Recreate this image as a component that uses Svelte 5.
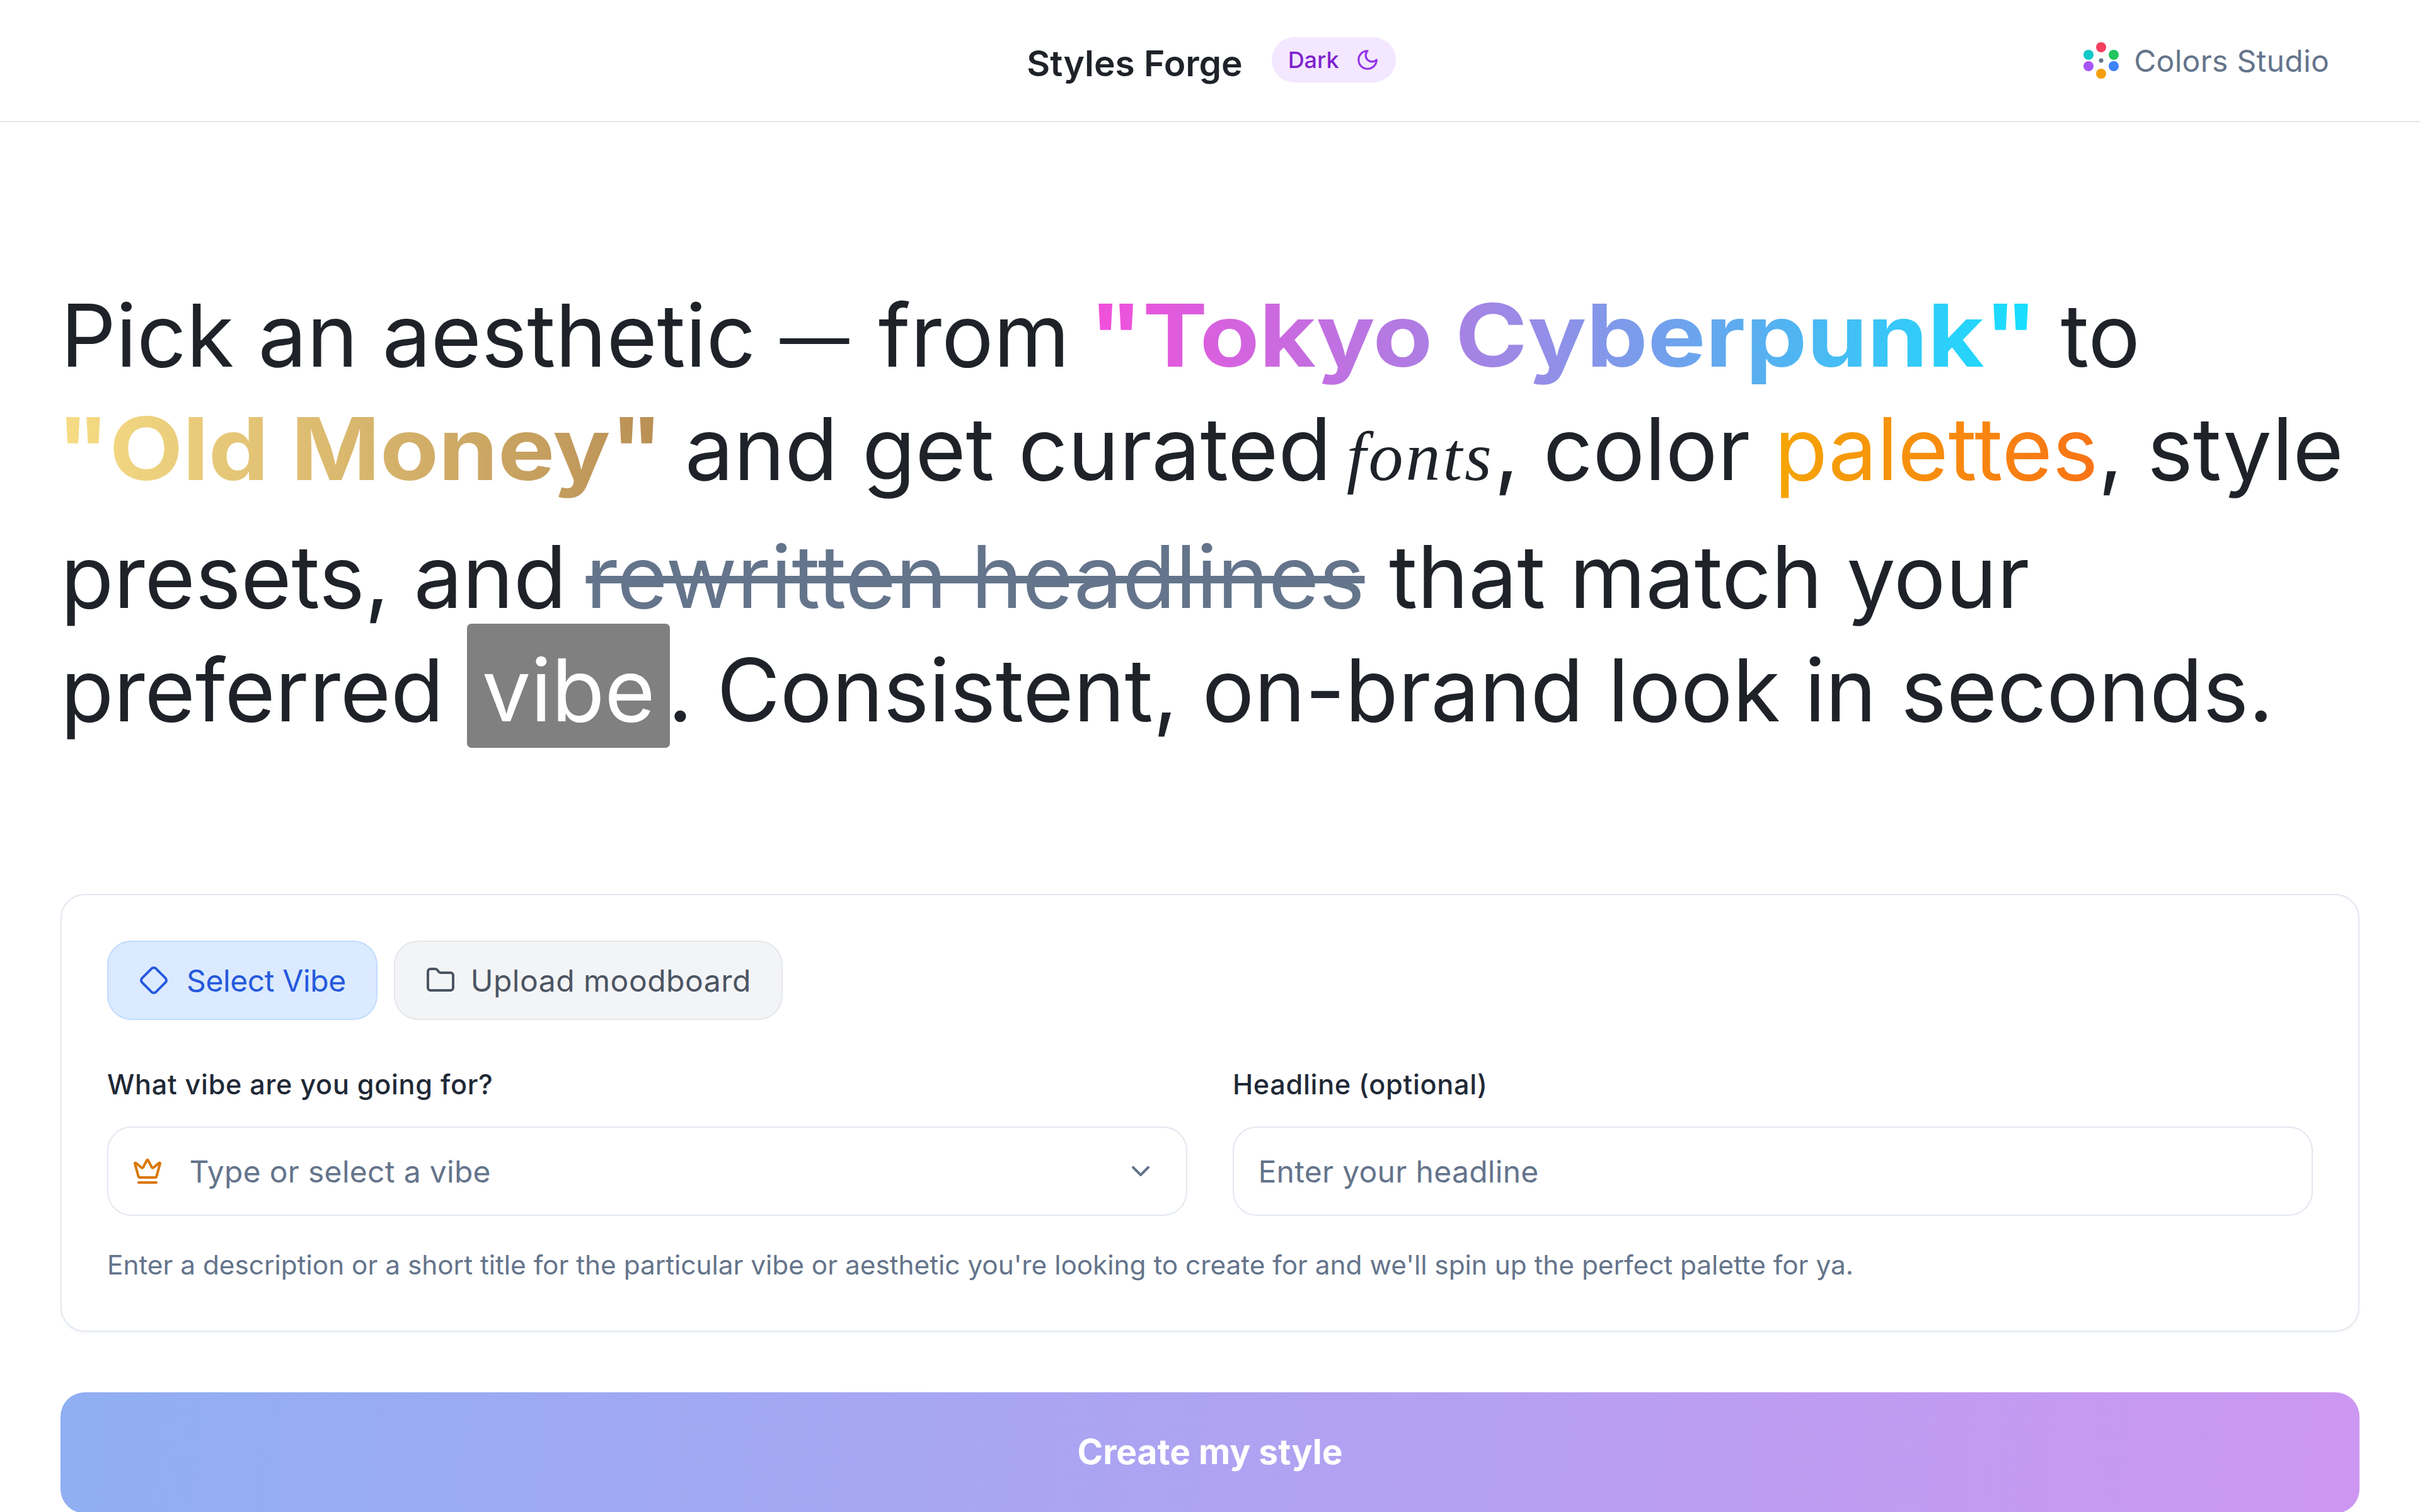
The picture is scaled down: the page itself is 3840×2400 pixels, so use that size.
<script>
  const dots = [
    { cx: 30, cy: 9, fill: '#f43f5e' },
    { cx: 50, cy: 21, fill: '#22c55e' },
    { cx: 50, cy: 39, fill: '#3b82f6' },
    { cx: 30, cy: 51, fill: '#f59e0b' },
    { cx: 10, cy: 39, fill: '#a855f7' },
    { cx: 10, cy: 21, fill: '#14c8c8' }
  ];
</script>

<header class="topbar">
  <div class="brand">
    <span class="title">Styles Forge</span>
    <span class="badge">
      Dark
      <svg viewBox="0 0 24 24" class="moon"><path d="M12 3a6 6 0 0 0 9 9 9 9 0 1 1-9-9Z" /></svg>
    </span>
  </div>
  <a class="studio" href="#studio">
    <svg viewBox="0 0 60 60" class="logo">
      {#each dots as dot}
        <circle cx={dot.cx} cy={dot.cy} r="8" fill={dot.fill} />
      {/each}
      <circle cx="30" cy="30" r="3.5" fill="#64748b" />
    </svg>
    Colors Studio
  </a>
</header>

<main>
  <h1>
    Pick an aesthetic <span class="dash">—</span> from <span class="bold tokyo">"Tokyo Cyberpunk"</span> to<br />
    <span class="bold money">"Old Money"</span> and get curated <span class="script">fonts</span>, color <span class="palettes">palettes</span>, style<br />
    presets, and <span class="strike">rewritten headlines</span> that match your<br />
    preferred <span class="vibe">vibe</span>. Consistent, on-brand look in seconds.
  </h1>

  <section class="card">
    <div class="tabs">
      <button class="tab active">
        <svg viewBox="0 0 24 24"><path d="M2.7 10.3a2.41 2.41 0 0 0 0 3.41l7.59 7.59a2.41 2.41 0 0 0 3.41 0l7.59-7.59a2.41 2.41 0 0 0 0-3.41l-7.59-7.59a2.41 2.41 0 0 0-3.41 0Z" /></svg>
        Select Vibe
      </button>
      <button class="tab">
        <svg viewBox="0 0 24 24"><path d="M20 20a2 2 0 0 0 2-2V8a2 2 0 0 0-2-2h-7.9a2 2 0 0 1-1.69-.9L9.6 3.9A2 2 0 0 0 7.93 3H4a2 2 0 0 0-2 2v13a2 2 0 0 0 2 2Z" /></svg>
        Upload moodboard
      </button>
    </div>

    <div class="fields">
      <div class="field">
        <span class="label">What vibe are you going for?</span>
        <div class="input">
          <svg viewBox="0 0 24 24" class="crown">
            <path d="M11.562 3.266a.5.5 0 0 1 .876 0L15.39 8.87a1 1 0 0 0 1.516.294L21.183 5.5a.5.5 0 0 1 .798.519l-2.834 10.246a1 1 0 0 1-.956.734H5.81a1 1 0 0 1-.957-.734L2.02 6.02a.5.5 0 0 1 .798-.519l4.276 3.664a1 1 0 0 0 1.516-.294z" />
            <path d="M5 21h14" />
          </svg>
          <span class="placeholder">Type or select a vibe</span>
          <svg viewBox="0 0 24 24" class="chevron"><path d="m6 9 6 6 6-6" /></svg>
        </div>
      </div>
      <div class="field">
        <span class="label">Headline (optional)</span>
        <div class="input">
          <span class="placeholder">Enter your headline</span>
        </div>
      </div>
    </div>

    <p class="help">Enter a description or a short title for the particular vibe or aesthetic you're looking to create for and we'll spin up the perfect palette for ya.</p>
  </section>

  <button class="create">Create my style</button>
</main>

<style>
  :global(html), :global(body) {
    height: 100%;
    overflow: hidden;
    background: #fff;
  }

  :global(body) {
    font-family: Inter, "Liberation Sans", sans-serif;
    color: #1f2329;
  }

  svg {
    fill: none;
    stroke: currentColor;
    stroke-width: 2;
    stroke-linecap: round;
    stroke-linejoin: round;
    flex: none;
  }

  .topbar {
    position: relative;
    height: 192px;
    border-bottom: 2.4px solid #e5e7eb;
    display: flex;
    justify-content: center;
    align-items: center;
  }

  .brand {
    display: flex;
    align-items: center;
    gap: 46px;
    padding: 4px 0 0 4px;
  }

  .title {
    font-size: 56.8px;
    font-weight: 600;
    padding-top: 4px;
  }

  .badge {
    height: 72px;
    padding: 0 26px;
    border-radius: 36px;
    background: #f3e8ff;
    color: #7e22ce;
    font-size: 36px;
    font-weight: 500;
    display: flex;
    align-items: center;
    gap: 26px;
    margin-top: -6px;
  }

  .moon {
    width: 38px;
    height: 38px;
    color: #9333ea;
  }

  .studio {
    position: absolute;
    right: 144px;
    top: 66px;
    display: flex;
    align-items: center;
    gap: 22px;
    font-size: 48px;
    letter-spacing: 0.3px;
    color: #64748b;
    text-decoration: none;
  }

  .logo {
    width: 60px;
    height: 60px;
    stroke: none;
  }

  main {
    padding: 248px 96px 0;
  }

  h1 {
    margin: 0;
    font-size: 138px;
    font-weight: 400;
    line-height: 180px;
    letter-spacing: -0.3px;
    white-space: nowrap;
    color: #1f2329;
  }

  .dash {
    font-size: 110px;
    line-height: 0;
    vertical-align: 6px;
    margin-right: 8px;
  }

  /* display words are wider than Inter, stretched and given back their width */
  .bold {
    display: inline-block;
    font-weight: 700;
    transform-origin: left center;
    -webkit-background-clip: text;
    background-clip: text;
    color: transparent;
  }

  .tokyo {
    margin-left: -8px;
    margin-right: 160px;
    transform: scaleX(1.12);
    background-image: linear-gradient(90deg, #f24fdb, #9b8ae6 45%, #5aaef0 70%, #15e0ff);
  }

  .money {
    margin-left: -6px;
    margin-right: 84px;
    transform: scaleX(1.1);
    background-image: linear-gradient(90deg, #f7dd85, #b98f55);
  }

  .palettes {
    background-image: linear-gradient(90deg, #f5a505, #f97316);
    -webkit-background-clip: text;
    background-clip: text;
    color: transparent;
  }

  .script {
    display: inline-block;
    margin-left: -14px;
    padding-bottom: 10px;
    font-family: "Liberation Serif", serif;
    font-style: italic;
    font-size: 110px;
    letter-spacing: 4px;
  }

  .strike {
    margin-left: -8px;
    color: #64748b;
    text-decoration: line-through;
    text-decoration-thickness: 12px;
  }

  .vibe {
    margin: 0 -4px 0 -2px;
    padding: 21px 24px 9px;
    border-radius: 7px;
    background: #808080;
    color: #fff;
  }

  .card {
    margin-top: 234px;
    padding: 72px 72px 75px;
    border: 2.4px solid #e2e8f0;
    border-radius: 38.4px;
    box-shadow: 0 2px 5px rgba(15, 23, 42, 0.04);
  }

  .tabs {
    display: flex;
    gap: 26px;
  }

  .tab {
    height: 126px;
    padding: 0 48px;
    border: 2.4px solid #e5e7eb;
    border-radius: 38.4px;
    background: #f3f4f6;
    color: #4b5563;
    font: inherit;
    font-size: 48px;
    letter-spacing: 0.5px;
    display: flex;
    align-items: center;
    gap: 24px;
  }

  .tab svg {
    width: 48px;
    height: 48px;
  }

  .tab.active {
    background: #dbeafe;
    border-color: #bfdbfe;
    color: #2559dd;
    letter-spacing: -0.4px;
    gap: 28px;
  }

  .fields {
    margin-top: 76px;
    display: grid;
    grid-template-columns: 1fr 1fr;
    gap: 72px;
  }

  .field {
    display: flex;
    flex-direction: column;
    gap: 40px;
  }

  .label {
    font-size: 43.2px;
    font-weight: 500;
    line-height: 53px;
    letter-spacing: 0.7px;
    color: #1f2937;
  }

  .input {
    height: 142px;
    padding: 0 38.4px;
    box-sizing: border-box;
    border: 2.4px solid #e2e8f0;
    border-radius: 38.4px;
    display: flex;
    align-items: center;
    gap: 42px;
    font-size: 48px;
    letter-spacing: 0.3px;
    color: #64748b;
  }

  .placeholder {
    flex: 1;
  }

  .crown {
    width: 48px;
    height: 48px;
    color: #d97706;
  }

  .chevron {
    width: 48px;
    height: 48px;
    margin-right: 10px;
  }

  .help {
    margin: 49px 0 0;
    font-size: 42.3px;
    line-height: 58px;
    color: #64748b;
  }

  .create {
    display: block;
    width: 100%;
    height: 192px;
    margin-top: 96px;
    padding: 0 0 4px;
    border: none;
    border-radius: 38.4px;
    background: linear-gradient(95deg, #90aff3, #cd97f1);
    color: #fff;
    font: inherit;
    font-size: 55px;
    font-weight: 700;
  }
</style>
